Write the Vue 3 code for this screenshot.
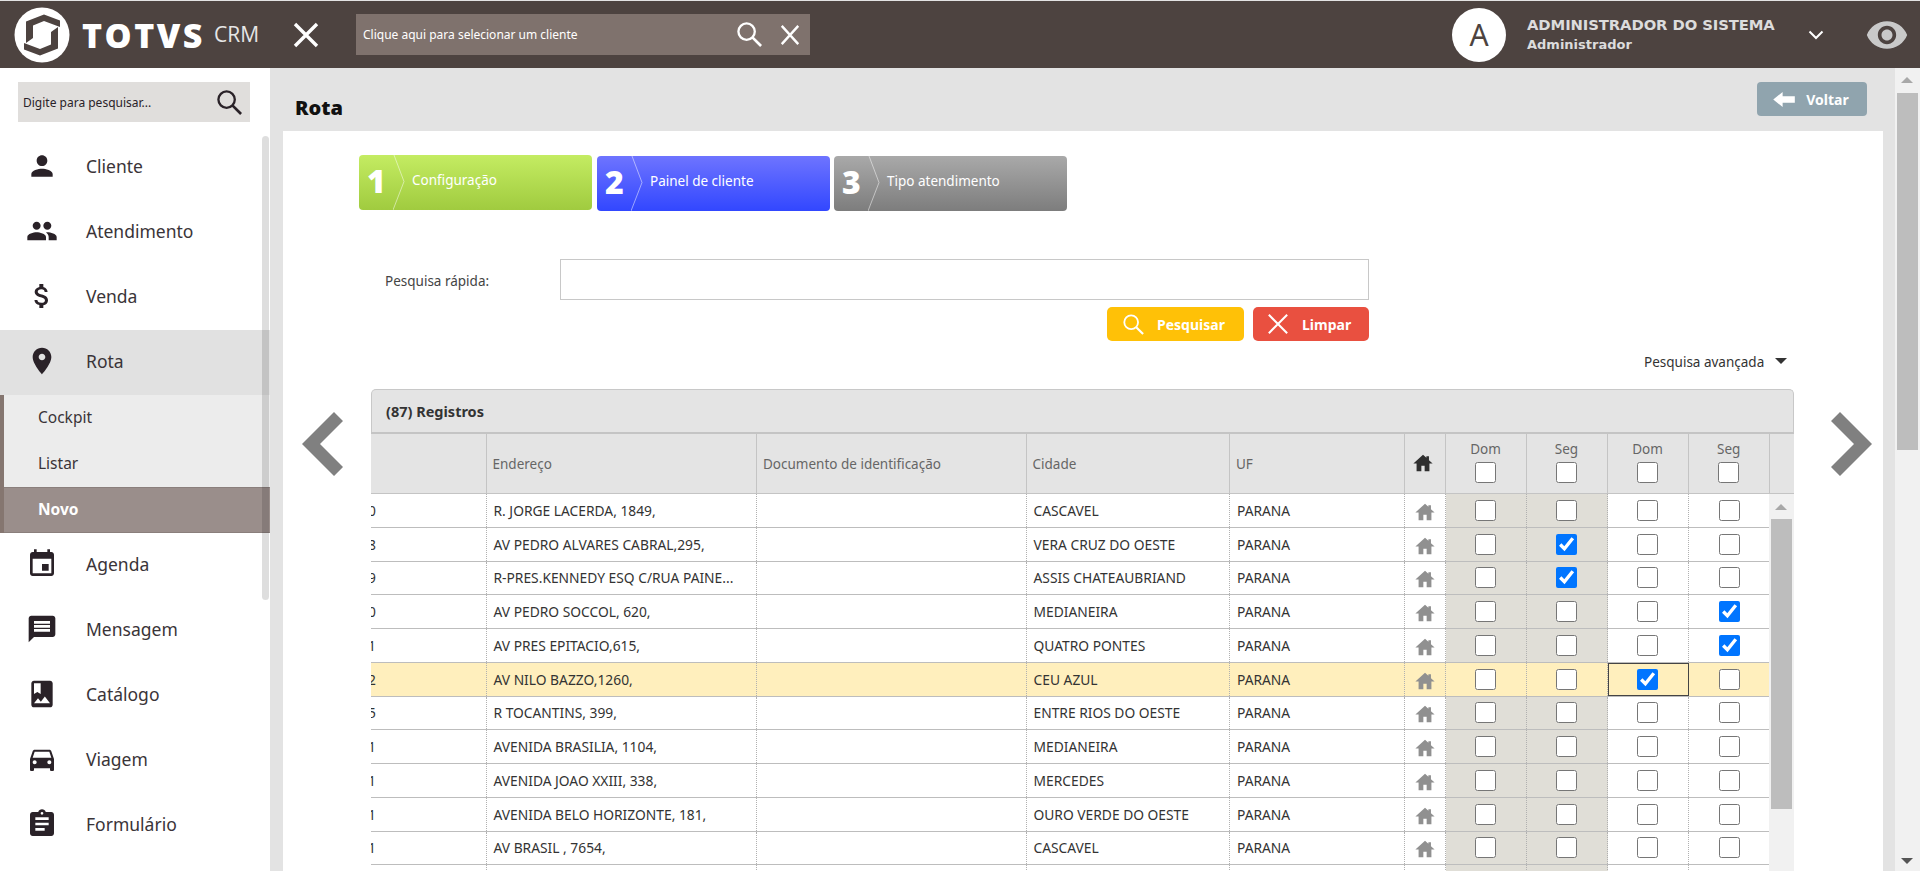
<script setup>
const menuTop = [
  { label: 'Cliente', d: 'M12 12c2.21 0 4-1.79 4-4s-1.79-4-4-4-4 1.79-4 4 1.79 4 4 4zm0 2c-2.67 0-8 1.34-8 4v2h16v-2c0-2.66-5.33-4-8-4z' },
  { label: 'Atendimento', d: 'M16 11c1.66 0 2.99-1.34 2.99-3S17.66 5 16 5c-1.66 0-3 1.34-3 3s1.34 3 3 3zm-8 0c1.66 0 2.99-1.34 2.99-3S9.66 5 8 5C6.34 5 5 6.34 5 8s1.34 3 3 3zm0 2c-2.33 0-7 1.17-7 3.5V19h14v-2.5c0-2.33-4.67-3.5-7-3.5zm8 0c-.29 0-.62.02-.97.05 1.16.84 1.97 1.97 1.97 3.45V19h6v-2.5c0-2.33-4.67-3.5-7-3.5z' },
  { label: 'Venda', d: 'M11.8 10.9c-2.27-.59-3-1.2-3-2.15 0-1.09 1.01-1.85 2.7-1.85 1.78 0 2.44.85 2.5 2.1h2.21c-.07-1.72-1.12-3.3-3.21-3.81V3h-3v2.16c-1.94.42-3.5 1.68-3.5 3.61 0 2.31 1.91 3.46 4.7 4.13 2.5.6 3 1.48 3 2.41 0 .69-.49 1.79-2.7 1.79-2.06 0-2.87-.92-2.98-2.1h-2.2c.12 2.19 1.76 3.42 3.68 3.83V21h3v-2.15c1.95-.37 3.5-1.5 3.5-3.55 0-2.84-2.43-3.81-4.7-4.4z' },
  { label: 'Rota', active: true, d: 'M12 2C8.13 2 5 5.13 5 9c0 5.25 7 13 7 13s7-7.75 7-13c0-3.87-3.13-7-7-7zm0 9.5c-1.38 0-2.5-1.12-2.5-2.5s1.12-2.5 2.5-2.5 2.5 1.12 2.5 2.5-1.12 2.5-2.5 2.5z' }
]
const menuBottom = [
  { label: 'Agenda', d: 'M17 12h-5v5h5v-5zM16 1v2H8V1H6v2H5c-1.11 0-1.99.9-1.99 2L3 19c0 1.1.89 2 2 2h14c1.1 0 2-.9 2-2V5c0-1.1-.9-2-2-2h-1V1h-2zm3 18H5V8h14v11z' },
  { label: 'Mensagem', d: 'M20 2H4c-1.1 0-1.99.9-1.99 2L2 22l4-4h14c1.1 0 2-.9 2-2V4c0-1.1-.9-2-2-2zm-2 12H6v-2h12v2zm0-3H6V9h12v2zm0-3H6V6h12v2z' },
  { label: 'Catálogo', d: 'M18 2H6c-1.1 0-2 .9-2 2v16c0 1.1.9 2 2 2h12c1.1 0 2-.9 2-2V4c0-1.1-.9-2-2-2zM6 4h5v8l-2.5-1.5L6 12V4zm0 15l3-3.86 2.14 2.58 3-3.86L18 19H6z' },
  { label: 'Viagem', d: 'M18.92 6.01C18.72 5.42 18.16 5 17.5 5h-11c-.66 0-1.21.42-1.42 1.01L3 12v8c0 .55.45 1 1 1h1c.55 0 1-.45 1-1v-1h12v1c0 .55.45 1 1 1h1c.55 0 1-.45 1-1v-8l-2.08-5.99zM6.5 16c-.83 0-1.5-.67-1.5-1.5S5.67 13 6.5 13s1.5.67 1.5 1.5S7.33 16 6.5 16zm11 0c-.83 0-1.5-.67-1.5-1.5s.67-1.5 1.5-1.5 1.5.67 1.5 1.5-.67 1.5-1.5 1.5zM5 11l1.5-4.5h11L19 11H5z' },
  { label: 'Formulário', d: 'M19 3h-4.18C14.4 1.84 13.3 1 12 1c-1.3 0-2.4.84-2.82 2H5c-1.1 0-2 .9-2 2v14c0 1.1.9 2 2 2h14c1.1 0 2-.9 2-2V5c0-1.1-.9-2-2-2zm-7 0c.55 0 1 .45 1 1s-.45 1-1 1-1-.45-1-1 .45-1 1-1zm2 14H7v-2h7v2zm3-4H7v-2h10v2zm0-4H7V7h10v2z' }
]
const submenu = ['Cockpit', 'Listar']
const steps = [
  { n: 1, label: 'Configuração', cls: 'green' },
  { n: 2, label: 'Painel de cliente', cls: 'blue' },
  { n: 3, label: 'Tipo atendimento', cls: 'gray' }
]
const rows = [
  { code: '0', addr: 'R. JORGE LACERDA, 1849,', city: 'CASCAVEL', c: [] },
  { code: '8', addr: 'AV PEDRO ALVARES CABRAL,295,', city: 'VERA CRUZ DO OESTE', c: [1] },
  { code: '9', addr: 'R-PRES.KENNEDY ESQ C/RUA PAINE...', city: 'ASSIS CHATEAUBRIAND', c: [1] },
  { code: '0', addr: 'AV PEDRO SOCCOL, 620,', city: 'MEDIANEIRA', c: [3] },
  { code: '1', addr: 'AV PRES EPITACIO,615,', city: 'QUATRO PONTES', c: [3] },
  { code: '2', addr: 'AV NILO BAZZO,1260,', city: 'CEU AZUL', c: [2], sel: true },
  { code: '5', addr: 'R TOCANTINS, 399,', city: 'ENTRE RIOS DO OESTE', c: [] },
  { code: '1', addr: 'AVENIDA BRASILIA, 1104,', city: 'MEDIANEIRA', c: [] },
  { code: '1', addr: 'AVENIDA JOAO XXIII, 338,', city: 'MERCEDES', c: [] },
  { code: '1', addr: 'AVENIDA BELO HORIZONTE, 181,', city: 'OURO VERDE DO OESTE', c: [] },
  { code: '1', addr: 'AV BRASIL , 7654,', city: 'CASCAVEL', c: [] },
  { code: '', addr: '', city: '', c: [] }
]
const days = ['Dom', 'Seg', 'Dom', 'Seg']
const homePath = 'M12 3 1.5 12.5H5V21h5.2v-6h3.6v6H19v-8.5h3.5L18.5 9V4.5h-2.8v1.9z'
</script>

<template>
  <div class="page">
    <header class="topbar">
      <div class="logo">
        <svg class="logo-mark" viewBox="0 0 56 56" aria-hidden="true">
          <circle cx="28" cy="28" r="27.5" fill="#fff" />
          <path d="M12 14.5 30 7.5 46 13.5V20L30 14 19 18.5V31L12 36z" fill="#4d4340" />
          <path d="M44 41.5 26 48.5 10 42.5V36L26 42 37 37.5V25L44 20z" fill="#4d4340" />
        </svg>
        <span class="logo-name">TOTVS</span>
        <span class="logo-crm">CRM</span>
      </div>
      <svg class="top-x" viewBox="0 0 32 32" aria-hidden="true"><path d="M5 5 27 27M27 5 5 27" stroke="#fff" stroke-width="3.4" fill="none" /></svg>
      <div class="client-search">
        <span class="client-text">Clique aqui para selecionar um cliente</span>
        <svg class="cs-icon" viewBox="0 0 28 28" aria-hidden="true"><circle cx="11" cy="11" r="8.5" fill="none" stroke="#fff" stroke-width="2.4" /><path d="M17 17 26 26" stroke="#fff" stroke-width="2.8" /></svg>
        <svg class="cs-x" viewBox="0 0 24 24" aria-hidden="true"><path d="M3 2 21 22M21 2 3 22" stroke="#fff" stroke-width="2.6" fill="none" /></svg>
      </div>
      <div class="spacer"></div>
      <div class="avatar">A</div>
      <div class="user">
        <div class="user-name">ADMINISTRADOR DO SISTEMA</div>
        <div class="user-role">Administrador</div>
      </div>
      <svg class="chev" viewBox="0 0 16 10" aria-hidden="true"><path d="M1.5 1.5 8 8 14.5 1.5" stroke="#fff" stroke-width="2" fill="none" /></svg>
      <svg class="eye" viewBox="0 0 24 24" aria-hidden="true"><path fill="#c9c9c9" d="M12 4.5C7 4.5 2.73 7.61 1 12c1.73 4.39 6 7.5 11 7.5s9.27-3.11 11-7.5c-1.73-4.39-6-7.5-11-7.5zM12 17c-2.76 0-5-2.24-5-5s2.24-5 5-5 5 2.24 5 5-2.24 5-5 5zm0-8c-1.66 0-3 1.34-3 3s1.34 3 3 3 3-1.34 3-3-1.34-3-3-3z" /></svg>
    </header>

    <div class="body">
      <aside class="sidebar">
        <div class="side-search">
          <span>Digite para pesquisar...</span>
          <svg viewBox="0 0 28 28" aria-hidden="true"><circle cx="11" cy="11" r="8.5" fill="none" stroke="#2a2228" stroke-width="2.4" /><path d="M17 17 26 26" stroke="#2a2228" stroke-width="2.8" /></svg>
        </div>
        <nav class="menu">
          <div v-for="m in menuTop" :key="m.label" class="item" :class="{ active: m.active }">
            <svg viewBox="0 0 24 24" aria-hidden="true"><path :d="m.d" /></svg>
            <span>{{ m.label }}</span>
          </div>
          <div class="sub">
            <div v-for="s in submenu" :key="s" class="sub-item">{{ s }}</div>
            <div class="sub-item current">Novo</div>
          </div>
          <div v-for="m in menuBottom" :key="m.label" class="item">
            <svg viewBox="0 0 24 24" aria-hidden="true"><path :d="m.d" /></svg>
            <span>{{ m.label }}</span>
          </div>
        </nav>
        <div class="side-scroll"></div>
      </aside>

      <main class="main">
        <div class="title-row">
          <h1>Rota</h1>
          <button class="back" type="button">
            <svg viewBox="0 0 24 16" aria-hidden="true"><path fill="#fff" d="M0 8 10 0v4.5h13v7H10V16z" /></svg>
            Voltar
          </button>
        </div>

        <section class="content">
          <div class="steps">
            <div v-for="s in steps" :key="s.n" class="step" :class="s.cls">
              <b>{{ s.n }}</b>
              <svg class="step-line" viewBox="0 0 14 56" preserveAspectRatio="none" aria-hidden="true"><path d="M1 0 11 27 0 56" fill="none" stroke="#fff" stroke-opacity=".5" /></svg>
              <span>{{ s.label }}</span>
            </div>
          </div>

          <div class="quick">
            <label>Pesquisa rápida:</label>
            <div class="quick-box"></div>
          </div>
          <div class="actions">
            <button class="act yellow" type="button">
              <svg viewBox="0 0 24 24" aria-hidden="true"><circle cx="10" cy="10" r="7.5" fill="none" stroke="#fff" stroke-width="2" /><path d="M15.5 15.5 23 23" stroke="#fff" stroke-width="2.4" /></svg>
              Pesquisar
            </button>
            <button class="act red" type="button">
              <svg viewBox="0 0 24 24" aria-hidden="true"><path d="M2 2 22 22M22 2 2 22" stroke="#fff" stroke-width="2.2" fill="none" /></svg>
              Limpar
            </button>
          </div>
          <div class="advanced">Pesquisa avançada <i></i></div>

          <div class="panel">
            <div class="panel-head">(87) Registros</div>
            <div class="grid-row head">
              <div class="hc"></div>
              <div class="hc">Endereço</div>
              <div class="hc">Documento de identificação</div>
              <div class="hc">Cidade</div>
              <div class="hc">UF</div>
              <div class="hc center"><svg class="home dark" viewBox="0 0 24 24" aria-hidden="true"><path :d="homePath" /></svg></div>
              <div v-for="(d, i) in days" :key="i" class="hc day">
                <span>{{ d }}</span>
                <input type="checkbox" tabindex="-1" />
              </div>
              <div class="hc"></div>
            </div>
            <div class="grid-body">
              <div class="rows">
                <div v-for="(r, i) in rows" :key="i" class="grid-row tr" :class="{ sel: r.sel }">
                  <div class="td code"><span>{{ r.code }}</span></div>
                  <div class="td">{{ r.addr }}</div>
                  <div class="td"></div>
                  <div class="td">{{ r.city }}</div>
                  <div class="td">{{ r.addr ? 'PARANA' : '' }}</div>
                  <div class="td center"><svg class="home" viewBox="0 0 24 24" aria-hidden="true"><path :d="homePath" /></svg></div>
                  <div v-for="k in 4" :key="k" class="td center" :class="{ shade: k < 3, focus: r.sel && k === 3 }">
                    <input type="checkbox" tabindex="-1" :checked="r.c.includes(k - 1)" />
                  </div>
                </div>
              </div>
              <div class="vscroll"><i></i><b></b></div>
            </div>
          </div>

          <svg class="nav prev" viewBox="0 0 41 64" aria-hidden="true"><path d="M41 9 32 0 0 32 32 64 41 55 18 32z" /></svg>
          <svg class="nav next" viewBox="0 0 41 64" aria-hidden="true"><path d="M0 9 9 0 41 32 9 64 0 55 23 32z" /></svg>
        </section>
      </main>

      <div class="page-scroll">
        <i class="up"></i>
        <b></b>
        <i class="down"></i>
      </div>
    </div>
  </div>
</template>

<style>
html, body { margin: 0; overflow: hidden; }
</style>

<style scoped>
.page {
  width: 1920px;
  height: 871px;
  overflow: hidden;
  display: flex;
  flex-direction: column;
  background: #e3e3e3;
  font-family: "Noto Sans", "Liberation Sans", sans-serif;
  color: #333;
}
.topbar {
  height: 67px;
  margin-top: 1px;
  flex: none;
  display: flex;
  align-items: center;
  background: #4d4340;
}
.logo { display: flex; align-items: center; width: 290px; flex: none; }
.logo-mark { width: 56px; height: 56px; margin-left: 14px; flex: none; }
.logo-name {
  margin-left: 12px;
  font: 800 34px/1 "Open Sans", sans-serif;
  color: #fff;
  letter-spacing: 2.5px;
}
.logo-crm {
  margin-left: 9px;
  font: 400 21px/1 "Open Sans", sans-serif;
  color: #e6e6e6;
}
.top-x { width: 32px; height: 32px; flex: none; }
.client-search {
  margin-left: 34px;
  width: 454px;
  height: 41px;
  flex: none;
  display: flex;
  align-items: center;
  background: #7f726d;
  color: #fff;
  font-size: 12px;
  box-sizing: border-box;
  padding-left: 7px;
}
.client-text { flex: 1; }
.cs-icon { width: 27px; height: 27px; margin-right: 16px; }
.cs-x { width: 22px; height: 24px; margin-right: 9px; }
.spacer { flex: 1; }
.avatar {
  width: 54px;
  height: 54px;
  border-radius: 50%;
  background: #fff;
  display: flex;
  align-items: center;
  justify-content: center;
  font-size: 30px;
  color: #4d4340;
  flex: none;
}
.user { margin-left: 21px; width: 282px; flex: none; color: #dcdcdc; font-family: "DejaVu Sans", sans-serif; font-weight: 700; }
.user-name { font-size: 14.8px; line-height: 21px; letter-spacing: -0.1px; }
.user-role { font-size: 13px; line-height: 20px; }
.chev { width: 16px; height: 10px; flex: none; margin-right: 41px; margin-left: -1px; }
.eye { width: 44px; height: 44px; flex: none; margin-right: 11px; }

.body { flex: 1; display: flex; min-height: 0; }

.sidebar { width: 270px; flex: none; background: #fff; position: relative; box-sizing: border-box; padding-top: 14px; }
.side-search {
  margin: 0 20px 0 18px;
  height: 40px;
  background: #e0dedc;
  display: flex;
  align-items: center;
  justify-content: space-between;
  padding: 0 7px 0 5px;
  font-size: 12px;
  color: #2a2228;
}
.side-search svg { width: 27px; height: 27px; }
.menu { margin-top: 13px; }
.item {
  height: 65px;
  box-sizing: border-box;
  padding: 0 0 3px 26px;
  display: flex;
  align-items: center;
  font-size: 17.5px;
  color: #3a3438;
}
.item svg { width: 32px; height: 32px; fill: #2a2228; flex: none; margin-right: 28px; }
.item.active { background: #e1e1e1; }
.sub { background: #ececec; border-left: 4px solid #857670; }
.sub-item { height: 46px; display: flex; align-items: center; padding-left: 34px; font-size: 15.5px; color: #3a3438; box-sizing: border-box; padding-bottom: 2px; }
.sub-item.current { background: #9a8e8b; color: #fff; font-weight: 700; border-top: 1px solid #8a7f7c; border-bottom: 1px solid #8a7f7c; }
.side-scroll {
  position: absolute;
  left: 262px;
  top: 68px;
  width: 7px;
  height: 464px;
  background: rgba(0, 0, 0, 0.13);
  border-radius: 4px;
}

.main { flex: 1; min-width: 0; padding-left: 13px; display: flex; flex-direction: column; }
.title-row { height: 63px; flex: none; display: flex; justify-content: space-between; box-sizing: border-box; width: 1612px; padding-right: 28px; }
h1 { margin: 28px 0 0 12px; font: 800 20px/24px "Open Sans", sans-serif; color: #111; }
.back {
  margin-top: 14px;
  width: 110px;
  height: 34px;
  border: 0;
  border-radius: 4px;
  background: #90a4ae;
  color: #fff;
  font: 700 14px "Noto Sans", sans-serif;
  display: flex;
  align-items: center;
  justify-content: center;
  gap: 10px;
  padding: 0 2px 0 0;
}
.back svg { width: 23px; height: 15px; }

.content { flex: 1; min-height: 0; width: 1600px; background: #fff; position: relative; padding: 24px 0 0 88px; box-sizing: border-box; }

.steps { display: flex; gap: 5px; margin-left: -12px; }
.step {
  width: 233px;
  height: 55px;
  box-sizing: border-box;
  border-radius: 4px;
  display: flex;
  align-items: center;
  color: #fff;
  position: relative;
  font-size: 13.5px;
  padding: 0 0 6px 53px;
}
.step:nth-child(n + 2) { margin-top: 1px; }
.step:nth-child(3) { margin-left: -1px; }
.step b { position: absolute; left: 8px; top: 5px; font: 800 32px/42px "Open Sans", sans-serif; }
.step-line { position: absolute; left: 34px; top: 0; width: 14px; height: 55px; }
.green { background: linear-gradient(#c4ec62, #a0cb3f); }
.blue { background: linear-gradient(#6e74ff, #3247ff); }
.gray { background: linear-gradient(#a9a9a9, #7d7d7d); }

.quick { display: flex; align-items: center; margin-top: 48px; margin-left: 14px; }
.quick label { width: 175px; font-size: 13.5px; color: #444; flex: none; padding-top: 2px; }
.quick-box { width: 809px; height: 41px; box-sizing: border-box; border: 1px solid #c8c8c8; }
.actions { display: flex; gap: 9px; margin: 7px 0 0 736px; }
.act {
  height: 34px;
  border: 0;
  border-radius: 5px;
  color: #fff;
  font: 700 14px "Noto Sans", sans-serif;
  display: flex;
  align-items: center;
  padding: 0;
}
.act svg { width: 22px; height: 22px; flex: none; }
.yellow { width: 137px; background: #ffc107; padding-left: 15px; gap: 13px; }
.red { width: 116px; background: #e95040; padding-left: 14px; gap: 13px; }
.advanced { margin: 10px 0 0 1273px; font-size: 13.5px; line-height: 22px; color: #333; white-space: nowrap; }
.advanced i { display: inline-block; width: 0; height: 0; border: 6px solid transparent; border-top-color: #333; border-bottom: 0; margin-left: 7px; vertical-align: 3px; }

.panel { width: 1423px; margin-top: 16px; }
.panel-head {
  height: 43px;
  box-sizing: border-box;
  border: 1px solid #c8c8c8;
  border-bottom: 0;
  border-radius: 5px 5px 0 0;
  background: #e4e4e4;
  display: flex;
  align-items: center;
  padding-left: 14px;
  font-size: 14.5px;
  font-weight: 700;
  color: #333;
}
.grid-row { display: grid; grid-template-columns: 115.5px 270.5px 269.5px 203.5px 175px 40.5px 81px 81px 81px 81.5px 25px; }
.head { height: 62px; box-sizing: border-box; background: #e4e4e4; border-top: 2px solid #c4c4c4; border-bottom: 1px solid #c4c4c4; font-size: 13.5px; color: #666; }
.hc { border-right: 1px solid #c4c4c4; display: flex; align-items: center; padding-left: 6px; min-width: 0; box-sizing: border-box; }
.hc:last-child { border-right: 0; }
.center { justify-content: center; padding-left: 0 !important; }
.day { flex-direction: column; padding: 6px 0 0; justify-content: flex-start; gap: 4px; }
.day span { line-height: 18px; }
input[type="checkbox"] { width: 21px; height: 21px; margin: 0; accent-color: #0075ff; flex: none; }
.home { width: 22px; height: 22px; fill: #909090; margin: 3px 0 0 0; }
.home.dark { fill: #2f2f2f; margin: -1px 0 0 -3px; }

.grid-body { display: flex; height: 600px; }
.rows { width: 1398px; flex: none; }
.tr { grid-template-columns: 115.5px 270.5px 269.5px 203.5px 175px 40.5px 81px 81px 81px 81.5px; height: 33.75px; box-sizing: border-box; border-bottom: 1px solid #bdbdbd; font-size: 13.8px; color: #333; }
.td { display: flex; align-items: center; padding-left: 7px; border-right: 1px dotted #b0b0b0; box-sizing: border-box; white-space: nowrap; overflow: hidden; min-width: 0; }
.td:last-child { border-right: 0; }
.code { overflow: hidden; padding-left: 0; }
.code span { margin-left: -3px; }
.shade { background: #e0ded7; }
.sel { background: #ffefbd; }
.sel .shade { background: #ffefbd; }
.sel .focus { outline: 1px solid #444; outline-offset: -1px; }
.vscroll { width: 25px; flex: none; background: #f1f1f1; position: relative; }
.vscroll i { position: absolute; left: 6px; top: 10px; border: 6px solid transparent; border-bottom-color: #a8a8a8; border-top: 0; }
.vscroll b { position: absolute; left: 2px; top: 25px; width: 21px; height: 290px; background: #bdbdbd; }

.nav { position: absolute; top: 281px; width: 41px; height: 64px; fill: #808080; }
.prev { left: 19px; }
.next { left: 1548px; }

.page-scroll { width: 25px; flex: none; background: #f1f1f1; position: relative; margin-left: 12px; }
.page-scroll b { position: absolute; left: 2px; top: 25px; width: 21px; height: 357px; background: #bdbdbd; }
.page-scroll .up { position: absolute; left: 6px; top: 9px; border: 6px solid transparent; border-bottom-color: #a8a8a8; border-top: 0; }
.page-scroll .down { position: absolute; left: 6px; bottom: 7px; border: 6px solid transparent; border-top-color: #555; border-bottom: 0; }
</style>
